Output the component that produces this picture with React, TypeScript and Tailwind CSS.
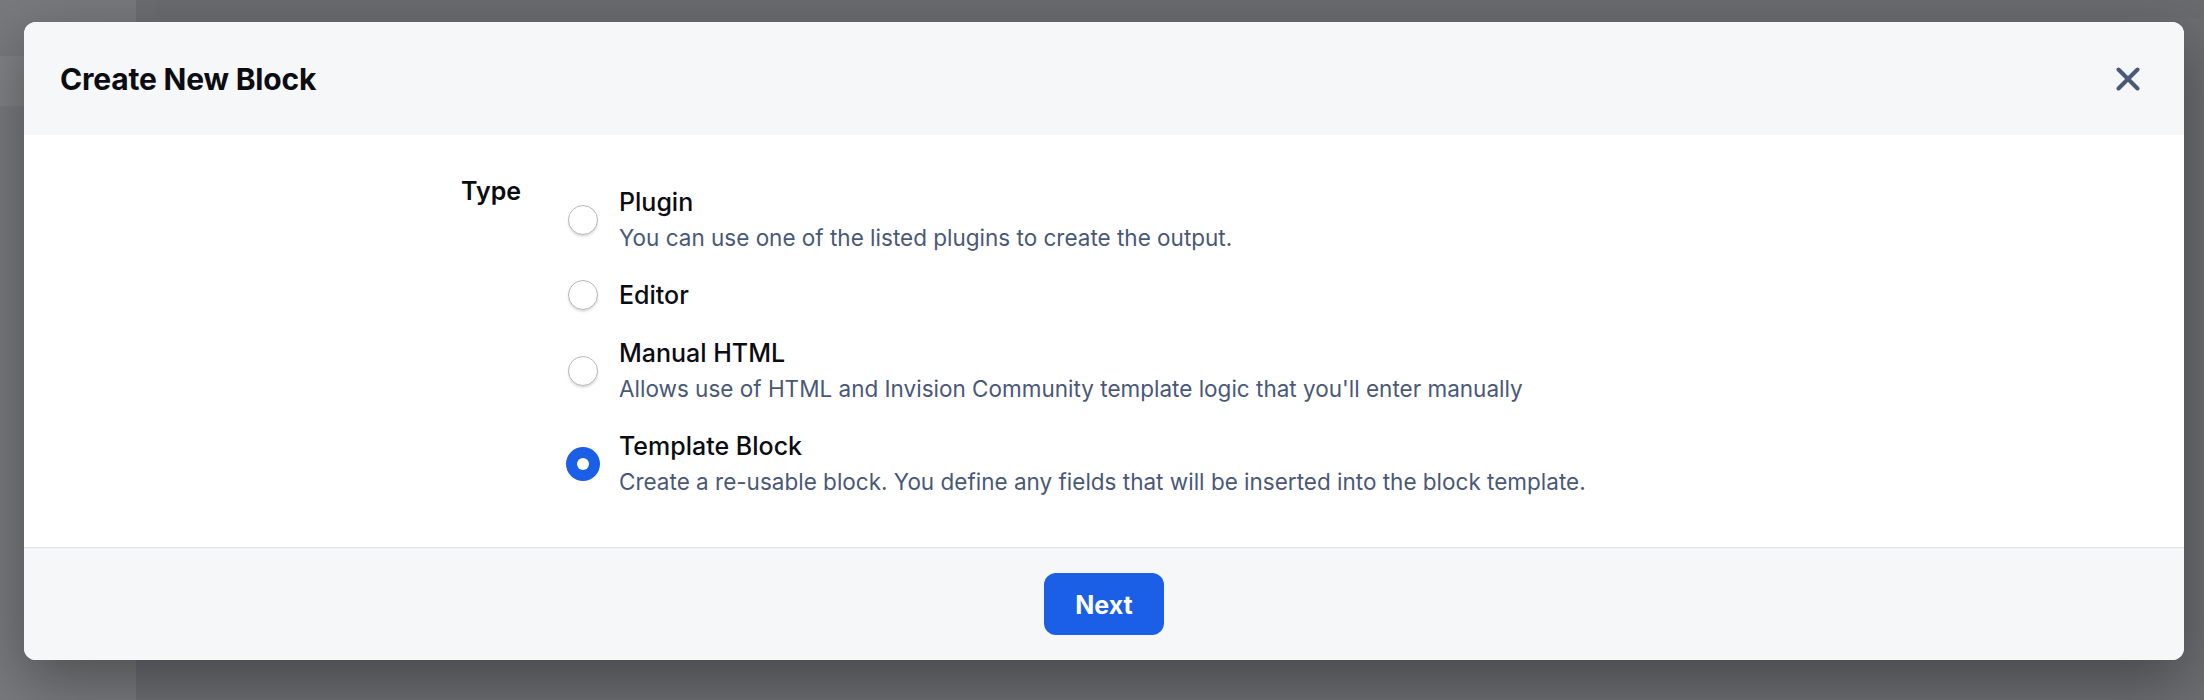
import { useState } from 'react';

const options = [
  { id: 'plugin', label: 'Plugin', desc: 'You can use one of the listed plugins to create the output.' },
  { id: 'editor', label: 'Editor', desc: '' },
  { id: 'html', label: 'Manual HTML', desc: "Allows use of HTML and Invision Community template logic that you'll enter manually" },
  { id: 'template', label: 'Template Block', desc: 'Create a re-usable block. You define any fields that will be inserted into the block template.' },
];

function CloseIcon() {
  return (
    <svg width="24" height="24" viewBox="0 0 24 24" fill="none" stroke="#4b5a78" strokeWidth="4" strokeLinecap="round">
      <path d="M2.5 2.5L21.5 21.5" />
      <path d="M21.5 2.5L2.5 21.5" />
    </svg>
  );
}

export default function App() {
  const [type, setType] = useState('template');

  return (
    <div className="relative w-[2204px] h-[700px] overflow-hidden bg-[#6b6d71] font-['Inter',sans-serif]">
      {/* blurred page behind the dialog */}
      <div className="absolute inset-0 flex">
        <div className="w-[136px] h-full bg-[#78797c] flex flex-col">
          <div className="h-[56px]" />
          <div className="h-[50px] bg-[#808184]" />
        </div>
        <div className="flex-1 flex flex-col">
          <div className="h-[18px] ml-[20px] bg-[#696b6f]" />
        </div>
      </div>

      <div className="relative pt-[22px] pl-[24px]">
        <div className="w-[2160px] rounded-[12px] overflow-hidden bg-white shadow-[0_20px_60px_rgba(0,0,0,0.35)]">
          {/* header */}
          <div className="h-[113px] bg-[#f6f7f9] flex items-center justify-between pl-[36px] pr-[44px]">
            <h1 className="text-[30px] leading-[36px] font-bold text-[#0b0d12] tracking-[-0.2px]">Create New Block</h1>
            <button className="w-[24px] h-[24px] flex items-center justify-center">
              <CloseIcon />
            </button>
          </div>

          {/* body */}
          <div className="flex pt-[40px] pb-[50px] pl-[437px]">
            <div className="w-[107px] text-[25px] leading-[32px] font-semibold text-[#0b0d12]">Type</div>
            <div className="flex flex-col gap-[26px] pt-[11px]">
              {options.map((o) => {
                const selected = type === o.id;
                return (
                  <label key={o.id} className="flex items-center gap-[21px] cursor-pointer" onClick={() => setType(o.id)}>
                    {selected ? (
                      <span className="w-[30px] h-[30px] shrink-0 rounded-full bg-[#1a5fe6] shadow-[0_0_0_2px_#1a5fe6] flex items-center justify-center">
                        <span className="w-[12px] h-[12px] rounded-full bg-white" />
                      </span>
                    ) : (
                      <span className="w-[30px] h-[30px] shrink-0 rounded-full bg-white border border-[#b5b8bd] shadow-[0_2px_2px_rgba(0,0,0,0.12)]" />
                    )}
                    <span className="flex flex-col gap-[5px]">
                      <span className="text-[25px] leading-[32px] font-medium text-[#0b0d12]">{o.label}</span>
                      {o.desc && <span className="text-[22.5px] leading-[30px] text-[#4a5878]">{o.desc}</span>}
                    </span>
                  </label>
                );
              })}
            </div>
          </div>

          {/* footer */}
          <div className="border-t border-[#dcdfe7] bg-[#f6f7f9] py-[25px] flex justify-center">
            <button className="w-[120px] h-[62px] pt-[3px] rounded-[12px] bg-[#1a5fe6] text-white text-[25px] font-bold">Next</button>
          </div>
        </div>
      </div>
    </div>
  );
}
